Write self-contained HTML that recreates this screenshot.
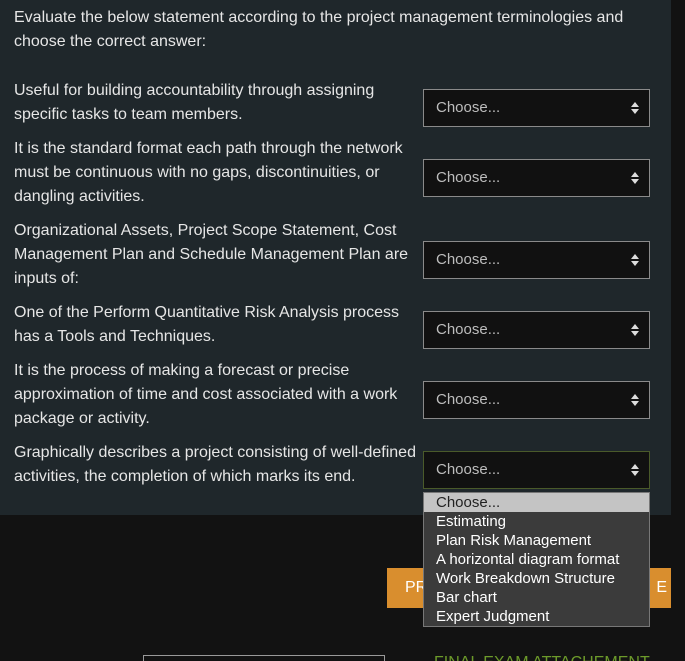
<!DOCTYPE html>
<html><head><style>
html,body{margin:0;height:661px;overflow:hidden;}
body{background:#121212;width:685px;position:relative;font-family:"Liberation Sans",Arial,sans-serif;}
.panel{position:absolute;left:0;top:0;width:671px;height:515px;background:#1f272b;}
.t{position:absolute;left:14px;color:#e6e6e6;font-size:16px;line-height:24px;}
.sel{position:absolute;left:423px;width:225px;height:36px;background:#111;border:1px solid #8a8a8a;color:#bdbdbd;font-size:15px;line-height:36px;box-sizing:content-box;}
.sel span{position:absolute;left:12px;}
.sel i{position:absolute;right:14px;top:12px;width:0;height:0;}
.sel i:before{content:"";position:absolute;left:-4px;top:0;border-left:4px solid transparent;border-right:4px solid transparent;border-bottom:5px solid #ddd;}
.sel i:after{content:"";position:absolute;left:-4px;top:7px;border-left:4px solid transparent;border-right:4px solid transparent;border-top:5px solid #ddd;}
.dd{position:absolute;left:423px;top:492px;width:225px;height:133px;background:#3b3b3b;border:1px solid #777;color:#fff;font-size:15px;}
.dd div{height:19px;line-height:19px;padding-left:12px;}
.dd div.first{background:#c4c4c4;color:#222;}
</style></head><body>
<div class="panel"></div>
<div class="t" style="top:6px">Evaluate the below statement according to the project management terminologies and<br>choose the correct answer:</div>
<div class="t" style="top:79px">Useful for building accountability through assigning<br>specific tasks to team members.</div>
<div class="t" style="top:137px">It is the standard format each path through the network<br>must be continuous with no gaps, discontinuities, or<br>dangling activities.</div>
<div class="t" style="top:219px">Organizational Assets, Project Scope Statement, Cost<br>Management Plan and Schedule Management Plan are<br>inputs of:</div>
<div class="t" style="top:301px">One of the Perform Quantitative Risk Analysis process<br>has a Tools and Techniques.</div>
<div class="t" style="top:359px">It is the process of making a forecast or precise<br>approximation of time and cost associated with a work<br>package or activity.</div>
<div class="t" style="top:441px">Graphically describes a project consisting of well-defined<br>activities, the completion of which marks its end.</div>
<div class="sel" style="top:89px"><span>Choose...</span><i></i></div>
<div class="sel" style="top:159px"><span>Choose...</span><i></i></div>
<div class="sel" style="top:241px"><span>Choose...</span><i></i></div>
<div class="sel" style="top:311px"><span>Choose...</span><i></i></div>
<div class="sel" style="top:381px"><span>Choose...</span><i></i></div>
<div class="sel" style="top:451px;border-color:#4a5a2a"><span>Choose...</span><i></i></div>
<div style="position:absolute;left:387px;top:568px;width:284px;height:40px;background:#d98e2e;color:#fff;font-size:16px;line-height:40px;"><span style="position:absolute;left:18px">PR</span><span style="position:absolute;right:4px">E</span></div>
<div class="dd"><div class="first">Choose...</div><div>Estimating</div><div>Plan Risk Management</div><div>A horizontal diagram format</div><div>Work Breakdown Structure</div><div>Bar chart</div><div>Expert Judgment</div></div>
<div style="position:absolute;left:143px;top:655px;width:240px;height:20px;border:1px solid #999;"></div>
<div style="position:absolute;left:434px;top:654px;color:#6c9a2a;font-size:16px;line-height:18px;">FINAL EXAM ATTACHEMENT</div>
</body></html>
